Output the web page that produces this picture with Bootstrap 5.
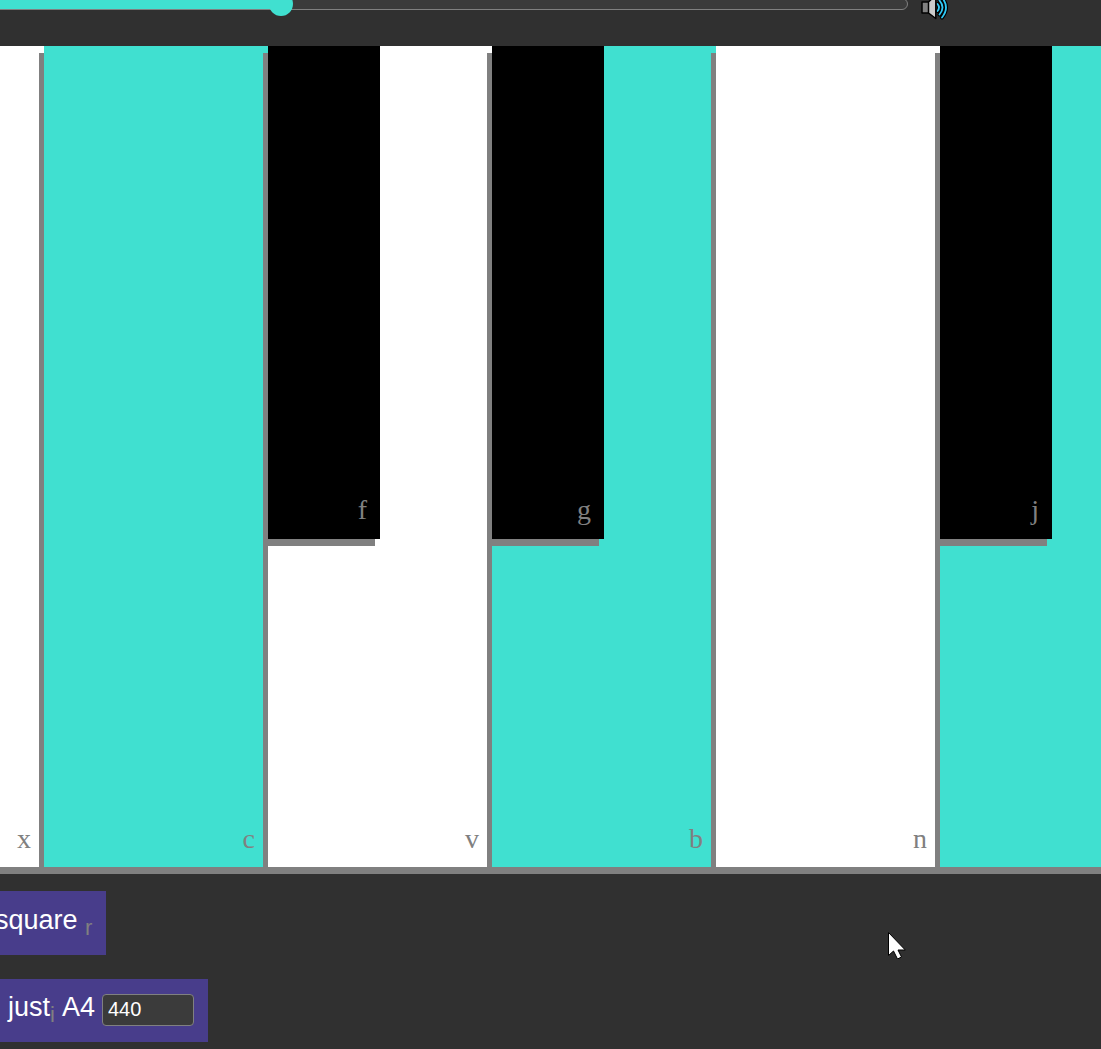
<!DOCTYPE html>
<html lang="en">
<head>
<meta charset="utf-8">
<meta name="viewport" content="width=device-width, initial-scale=1">
<title>Piano</title>
<link href="https://cdn.jsdelivr.net/npm/bootstrap@5.3.0/dist/css/bootstrap.min.css" rel="stylesheet">
<style>
  body { background: #303030; color: #fff; font-family: "Liberation Sans", Arial, sans-serif; overflow: hidden; }
  .volume-bar { height: 46px; padding-right: 152px; gap: 13px; }
  .volume-range { appearance: none; background: transparent; height: 24px; margin: -8px 0 0 -180px; padding: 0; min-width: 0; }
  .volume-range::-webkit-slider-runnable-track {
    box-sizing: border-box; height: 12px; border: 1px solid #808080; border-radius: 6px;
    background: linear-gradient(to right, #40e0d0 42%, #3b3b3b 42%);
  }
  .volume-range::-webkit-slider-thumb {
    appearance: none; width: 24px; height: 24px; margin-top: -7px;
    border: 0; border-radius: 50%; background: #40e0d0;
  }
  .speaker { display: block; margin-top: -6px; }
  .keyboard { height: 821px; margin-left: -180px; }
  .key-slot { flex: 0 0 224px; }
  .piano-key {
    display: flex; align-items: flex-end; justify-content: flex-end;
    border: 0; border-radius: 0; color: #808080; box-shadow: -5px 7px 0 #808080;
    font: 28px/28px "Liberation Serif", "Times New Roman", serif;
  }
  .white-key { background: #fff; padding: 0 13px 14px 0; }
  .white-key.pressed { background: #40e0d0; }
  .black-key { top: 0; left: 0; width: 50%; height: 60%; background: #000; padding: 0 13px 15px 0; }
  .controls { margin: 24px 0 0 -20px; gap: 24px; }
  .tone-box { background: #483d8b; color: #fff; border: 0; border-radius: 0; font-size: 27px; }
  .wave-btn { line-height: 32px; padding: 13px 14px 19px 15px; }
  .tuning-box { line-height: 24px; padding: 15px 14px 16px 28px; }
  .tuning-btn { border: 0; background: none; color: inherit; line-height: 24px; }
  .hotkey { font-size: 22px; line-height: 0; color: #808080; vertical-align: -6px; }
  .pitch-label { margin: 0 7px; }
  .pitch-input {
    width: 92px; height: 32px; padding: 0 5px 2px; font-size: 20px;
    color: #fff; background: #3b3b3b; border: 1px solid #808080; border-radius: 4px; appearance: textfield;
  }
  .pitch-input::-webkit-inner-spin-button { display: none; }
  .pointer { left: 888px; top: 931px; pointer-events: none; }
</style>
<script src="https://cdn.jsdelivr.net/npm/bootstrap@5.3.0/dist/js/bootstrap.bundle.min.js"></script>
</head>
<body>
<header class="volume-bar d-flex align-items-start overflow-hidden">
  <input type="range" class="volume-range flex-grow-1" id="volume" min="0" max="100" step="0.1" value="42.2">
  <label for="volume">
    <svg class="speaker" width="28" height="26" viewBox="0 0 28 26">
      <g fill="none" stroke-linecap="round">
        <path d="M16.500 10q3 3.500 0 7M18.500 6.500q6 7 0 14M21 3.500q8 10 0 20" stroke="#000" stroke-width="4"/>
        <path d="M16.500 10q3 3.500 0 7M18.500 6.500q6 7 0 14M21 3.500q8 10 0 20" stroke="#30c8f4" stroke-width="1.800"/>
      </g>
      <g stroke="#000" stroke-width="1.500" stroke-linejoin="round">
        <path d="M1 8h7v11H1z" fill="#808080"/>
        <path d="M7.500 8 14.800 1v23.500l-7.300-5.500z" fill="#ccc"/>
      </g>
    </svg>
  </label>
</header>

<main class="keyboard d-flex">
  <div class="key-slot position-relative"><button class="piano-key white-key w-100 h-100">x</button></div>
  <div class="key-slot position-relative"><button class="piano-key white-key pressed w-100 h-100">c</button></div>
  <div class="key-slot position-relative">
    <button class="piano-key white-key w-100 h-100">v</button>
    <button class="piano-key black-key position-absolute">f</button>
  </div>
  <div class="key-slot position-relative">
    <button class="piano-key white-key pressed w-100 h-100">b</button>
    <button class="piano-key black-key position-absolute">g</button>
  </div>
  <div class="key-slot position-relative"><button class="piano-key white-key w-100 h-100">n</button></div>
  <div class="key-slot position-relative">
    <button class="piano-key white-key pressed w-100 h-100"></button>
    <button class="piano-key black-key position-absolute">j</button>
  </div>
</main>

<footer class="controls d-flex flex-column align-items-start">
  <button class="tone-box wave-btn">square <span class="hotkey">r</span></button>
  <div class="tone-box tuning-box d-flex align-items-baseline">
    <button class="tuning-btn p-0">just<span class="hotkey">i</span></button>
    <label class="pitch-label" for="pitch">A4</label>
    <input class="pitch-input" id="pitch" type="number" value="440">
  </div>
</footer>

<svg class="pointer position-absolute" width="20" height="28" viewBox="0 0 20 28">
  <path d="M.5 1.500v23l5-4.500 4 8 4-2-3.500-7h7.300z" fill="#fff" stroke="#000" stroke-width="1"/>
</svg>
</body>
</html>
